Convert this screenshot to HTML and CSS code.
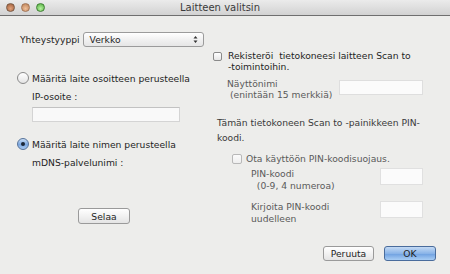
FILE: index.html
```html
<!DOCTYPE html>
<html lang="fi">
<head>
    <meta charset="UTF-8">
    <title>Laitteen valitsin</title>
    <link rel="stylesheet" href="styles.css">
</head>
<body>
    <div class="window">
        <div class="titlebar">
            <div class="lights">
                <span class="light close"></span>
                <span class="light mini"></span>
                <span class="light zoom"></span>
            </div>
            <div class="title">Laitteen valitsin</div>
            <div></div>
        </div>

        <div class="content">
            <div class="left">
                <div class="type-row">
                    <span class="label">Yhteystyyppi</span>
                    <div class="popup">
                        <span>Verkko</span>
                        <svg class="arrows" width="5" height="9" viewBox="0 0 5 9">
                            <path d="M0.5 3.5 L2.5 1 L4.5 3.5 Z M0.5 5.5 L2.5 8 L4.5 5.5 Z" fill="#333"/>
                        </svg>
                    </div>
                </div>

                <div class="radio-row first">
                    <span class="radio"></span>
                    <span>Määritä laite osoitteen perusteella</span>
                </div>
                <div class="field-label">IP-osoite :</div>
                <div class="text-field ip"></div>

                <div class="radio-row second">
                    <span class="radio checked"></span>
                    <span>Määritä laite nimen perusteella</span>
                </div>
                <div class="field-label">mDNS-palvelunimi :</div>

                <button class="btn browse">Selaa</button>
            </div>

            <div class="right">
                <div class="check-row register">
                    <span class="checkbox"></span>
                    <span>Rekisteröi &nbsp;tietokoneesi laitteen Scan to<br>-toimintoihin.</span>
                </div>

                <div class="pair name-pair">
                    <span class="dim">Näyttönimi<br>&nbsp;(enintään 15 merkkiä)</span>
                    <div class="text-field name"></div>
                </div>

                <p class="note">Tämän tietokoneen Scan to -painikkeen PIN-<br>koodi.</p>

                <div class="check-row pin-check">
                    <span class="checkbox off"></span>
                    <span class="dim">Ota käyttöön PIN-koodisuojaus.</span>
                </div>

                <div class="pair pin-pair">
                    <span class="dim">PIN-koodi<br>&nbsp;&nbsp;(0-9, 4 numeroa)</span>
                    <div class="text-field pin"></div>
                </div>
                <div class="pair pin-pair again">
                    <span class="dim">Kirjoita PIN-koodi<br>uudelleen</span>
                    <div class="text-field pin"></div>
                </div>
            </div>
        </div>

        <div class="footer">
            <button class="btn">Peruuta</button>
            <button class="btn default">OK</button>
        </div>
    </div>
</body>
</html>
```

FILE: styles.css
```css
body {
    margin: 0;
    padding: 0;
    font-family: "DejaVu Sans", Verdana, sans-serif;
    font-size: 9.2px;
    color: #1e1e1e;
}
.window {
    width: 450px;
    height: 274px;
    display: flex;
    flex-direction: column;
    background: #ededeb;
    overflow: hidden;
}
.titlebar {
    height: 15px;
    display: grid;
    grid-template-columns: 1fr auto 1fr;
    align-items: center;
    padding-right: 10px;
    background: linear-gradient(#ebebeb, #d2d2d2);
    border-bottom: 1px solid #6f6f6f;
}
.lights {
    display: flex;
    gap: 6px;
    padding-left: 6px;
}
.light {
    width: 9px;
    height: 9px;
    border-radius: 50%;
    box-sizing: border-box;
    border: 1px solid #7a5a44;
}
.light.close {
    background: radial-gradient(circle at 50% 65%, #e2a27c, #9c5a36);
}
.light.mini {
    background: radial-gradient(circle at 50% 65%, #f0c09a, #b97d52);
    border-color: #a27456;
}
.light.zoom {
    background: radial-gradient(circle at 50% 65%, #b8f2a0, #4fae3c);
    border-color: #3f7f34;
}
.title {
    font-size: 10px;
    color: #3a3a3a;
}

.content {
    display: flex;
    padding-left: 17px;
}
.left {
    width: 196px;
    display: flex;
    flex-direction: column;
    align-items: flex-start;
}
.type-row {
    display: flex;
    align-items: center;
    margin-top: 16px;
    margin-left: 3px;
}
.popup {
    width: 121px;
    height: 15px;
    margin-left: 3px;
    box-sizing: border-box;
    display: flex;
    align-items: center;
    justify-content: space-between;
    padding: 0 5px 0 6px;
    border: 1px solid #9b9b9b;
    border-radius: 3px;
    background: linear-gradient(#ffffff, #f1f1f1 50%, #e6e6e6);
}
.radio-row {
    display: flex;
    align-items: center;
    gap: 3px;
}
.radio-row.first {
    margin-top: 25px;
}
.radio-row.second {
    margin-top: 16px;
}
.radio {
    width: 12px;
    height: 12px;
    box-sizing: border-box;
    border-radius: 50%;
    border: 1px solid #8a8a8a;
    background: linear-gradient(#ffffff, #e4e4e4);
    display: flex;
    align-items: center;
    justify-content: center;
}
.radio.checked {
    border-color: #56739a;
    background: linear-gradient(#c9def6, #7ba7e0 55%, #a9c9f0);
}
.radio.checked::after {
    content: "";
    width: 4px;
    height: 4px;
    border-radius: 50%;
    background: #1b2636;
}
.field-label {
    margin-top: 7px;
    margin-left: 15px;
    line-height: 12px;
}
.text-field {
    box-sizing: border-box;
    background: #f9f9f9;
    border: 1px solid #d4d4d4;
    border-top-color: #c2c2c2;
}
.text-field.ip {
    width: 148px;
    height: 15px;
    margin-top: 4px;
    margin-left: 15px;
}
.btn {
    font-family: inherit;
    font-size: 9.2px;
    color: #1e1e1e;
    height: 15px;
    padding: 0;
    box-sizing: border-box;
    border: 1px solid #9a9a9a;
    border-radius: 3px;
    background: linear-gradient(#ffffff, #f2f2f2 50%, #e4e4e4);
}
.btn.browse {
    width: 52px;
    height: 16px;
    margin-top: 39px;
    margin-left: 61px;
}

.right {
    flex: 1;
    display: flex;
    flex-direction: column;
}
.check-row {
    display: flex;
    align-items: flex-start;
    line-height: 11px;
}
.check-row.register {
    margin-top: 34px;
    gap: 6px;
}
.checkbox {
    width: 9px;
    height: 9px;
    margin-top: 2px;
    box-sizing: border-box;
    border: 1px solid #8a8a8a;
    border-radius: 2px;
    background: linear-gradient(#ffffff, #e6e6e6);
    flex-shrink: 0;
}
.checkbox.off {
    width: 10px;
    height: 10px;
    margin-top: 0;
    border-color: #b8b8b8;
    background: linear-gradient(#fbfbfb, #eeeeee);
}
.dim {
    color: #5a5a5a;
}
.pair {
    display: flex;
    justify-content: space-between;
    align-items: flex-start;
    line-height: 11px;
    padding-right: 27px;
}
.name-pair {
    margin-top: 6px;
    padding-left: 14px;
}
.text-field.name {
    width: 84px;
    height: 15px;
    margin-top: 2px;
    border-color: #dedede;
    background: #fbfbfb;
}
.note {
    margin: 15px 0 0 4px;
    line-height: 15px;
    color: #3a3a3a;
}
.check-row.pin-check {
    margin-top: 9px;
    margin-left: 19px;
    gap: 4px;
    line-height: 10px;
}
.pin-pair {
    margin-top: 4px;
    padding-left: 38px;
    line-height: 12px;
}
.pin-pair.again {
    margin-top: 9px;
}
.text-field.pin {
    width: 43px;
    height: 17px;
    border-color: #e0e0e0;
    background: #fbfbfb;
}

.footer {
    margin-top: auto;
    display: flex;
    justify-content: flex-end;
    gap: 10px;
    padding: 0 14px 13px 0;
}
.footer .btn {
    width: 51px;
}
.btn.default {
    width: 52px;
    border-color: #4a6c9c;
    background: linear-gradient(#c4daf4, #8ab4e8 50%, #6d9fe0 51%, #a8cdf4);
}
```
